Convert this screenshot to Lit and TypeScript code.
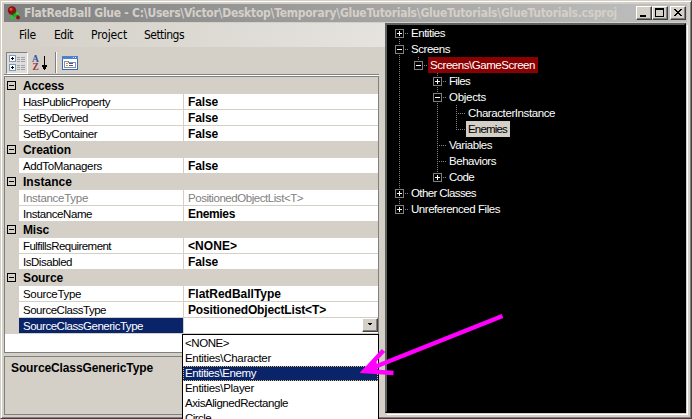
import { LitElement, html, svg, css, nothing } from "lit";
import { customElement, property } from "lit/decorators.js";

/** A run of text whose letter spacing is computed so that it takes a given width. */
@customElement("fit-text")
class FitText extends LitElement {
  @property({ type: Number }) w = 0;
  @property() text = "";
  static styles = css`
    :host { display: inline-block; white-space: pre; }
    .t { display: inline-block; white-space: pre; }
  `;
  render() {
    return html`<span class="t">${this.text}</span>`;
  }
  firstUpdated() {
    const el = this.renderRoot.querySelector(".t") as HTMLElement;
    const natural = el.getBoundingClientRect().width;
    if (this.w && natural) {
      el.style.letterSpacing = `${(this.w - natural) / this.text.length}px`;
    }
  }
}

type Prop = { name: string; nw: number; value?: string; vw?: number; off?: boolean; sel?: boolean };
type Category = { title: string; w: number; props: Prop[] };

const CATEGORIES: Category[] = [
  { title: "Access", w: 41, props: [
    { name: "HasPublicProperty", nw: 87, value: "False", vw: 30 },
    { name: "SetByDerived", nw: 65, value: "False", vw: 30 },
    { name: "SetByContainer", nw: 74, value: "False", vw: 30 },
  ] },
  { title: "Creation", w: 48, props: [{ name: "AddToManagers", nw: 79, value: "False", vw: 30 }] },
  { title: "Instance", w: 49, props: [
    { name: "InstanceType", nw: 65, value: "PositionedObjectList<T>", vw: 115, off: true },
    { name: "InstanceName", nw: 69, value: "Enemies", vw: 47 },
  ] },
  { title: "Misc", w: 26, props: [
    { name: "FulfillsRequirement", nw: 88, value: "<NONE>", vw: 49 },
    { name: "IsDisabled", nw: 49, value: "False", vw: 30 },
  ] },
  { title: "Source", w: 40, props: [
    { name: "SourceType", nw: 58, value: "FlatRedBallType", vw: 93 },
    { name: "SourceClassType", nw: 83, value: "PositionedObjectList<T>", vw: 138 },
    { name: "SourceClassGenericType", nw: 120, sel: true },
  ] },
];

const OPTIONS: [string, number][] = [
  ["<NONE>", 44], ["Entities\\Character", 86], ["Entities\\Enemy", 71],
  ["Entities\\Player", 69], ["AxisAlignedRectangle", 103], ["Circle", 26],
];

type Node = {
  label: string; w: number; depth: number; box?: "+" | "-";
  guides: [number, number, number][]; mark?: "red" | "sel";
};

const NODES: Node[] = [
  { label: "Entities", w: 34, depth: 0, box: "+", guides: [[0, 8, 16]] },
  { label: "Screens", w: 39, depth: 0, box: "-", guides: [[0, 0, 16]] },
  { label: "Screens\\GameScreen", w: 105, depth: 1, box: "-", guides: [[0, 0, 16], [1, 0, 8]], mark: "red" },
  { label: "Files", w: 21, depth: 2, box: "+", guides: [[0, 0, 16], [2, 0, 16]] },
  { label: "Objects", w: 37, depth: 2, box: "-", guides: [[0, 0, 16], [2, 0, 16]] },
  { label: "CharacterInstance", w: 87, depth: 3, guides: [[0, 0, 16], [2, 0, 16], [3, 0, 16]] },
  { label: "Enemies", w: 39, depth: 3, guides: [[0, 0, 16], [2, 0, 16], [3, 0, 8]], mark: "sel" },
  { label: "Variables", w: 43, depth: 2, guides: [[0, 0, 16], [2, 0, 16]] },
  { label: "Behaviors", w: 47, depth: 2, guides: [[0, 0, 16], [2, 0, 16]] },
  { label: "Code", w: 25, depth: 2, box: "+", guides: [[0, 0, 16], [2, 0, 8]] },
  { label: "Other Classes", w: 65, depth: 0, box: "+", guides: [[0, 0, 16]] },
  { label: "Unreferenced Files", w: 89, depth: 0, box: "+", guides: [[0, 0, 8]] },
];

@customElement("app-root")
class AppRoot extends LitElement {
  static styles = css`
    :host {
      display: block; position: relative; width: 692px; height: 419px; overflow: hidden;
      font: 11.5px/16px "Liberation Sans", Arial, sans-serif; color: #000; background: #d4d0c8;
    }
    * { box-sizing: border-box; }
    svg { display: block; flex: none; }
    .window {
      height: 419px; padding: 3px 4px 4px 3px; display: flex; flex-direction: column;
      border: 1px solid; border-color: #d4d0c8 #404040 #404040 #d4d0c8;
      box-shadow: inset 1px 1px #fff, inset -1px -1px #808080;
    }
    .title {
      height: 18px; display: flex; align-items: center; padding: 0 1px 0 2px; flex: none;
      background: linear-gradient(90deg, #808080, #c0c0c0); color: #d4d0c8;
      font: bold 12px/18px "DejaVu Sans Condensed", "DejaVu Sans", sans-serif;
    }
    .title fit-text { margin-left: 4px; flex: 1; }
    .btn {
      width: 16px; height: 14px; background: #d4d0c8; flex: none;
      border: 1px solid; border-color: #fff #404040 #404040 #fff;
      box-shadow: inset -1px -1px #808080;
    }
    .btn.close { margin-left: 2px; }
    .main { flex: 1; display: flex; min-height: 0; margin-top: 1px; }
    .left { width: 381px; display: flex; flex-direction: column; }
    .menu {
      height: 24px; display: flex; flex: none; padding-left: 15px;
      background: linear-gradient(90deg, #d4d0c8, #e4e3de);
      font: 12px/24px "DejaVu Sans Condensed", "DejaVu Sans", sans-serif;
    }
    .menu .item { width: var(--step); }
    .tools {
      height: 27px; width: 375px; flex: none; display: flex; align-items: flex-start;
      padding: 5px 0 0 2px;
    }
    .tool { width: 22px; height: 22px; display: flex; justify-content: center; align-items: center; }
    .tool.on { background: #e0ddd8; border: 1px solid; border-color: #808080 #fff #fff #808080; }
    .tool.az { width: 24px; }
    .az text { font: bold 9.5px "Liberation Serif", serif; }
    .sep { width: 2px; height: 21px; background: #808080; border-right: 1px solid #fff; margin: 0 2px 0 3px; }
    .edge { height: 2px; width: 375px; background: #808080; border-bottom: 1px solid #fff; flex: none; }
    .grid {
      position: relative; width: 375px; height: 277px; border: 1px solid #808080; background: #fff;
      flex: none;
    }
    .cat { height: 16px; background: #d4d0c8; display: flex; font-weight: bold; font-size: 12px; }
    .cat:first-child { height: 17px; padding-top: 1px; }
    .cat svg { margin: 3px 0 0 2px; }
    .cat fit-text { margin-left: 7px; }
    .row { display: flex; height: 16px; border-left: 14px solid #d4d0c8; }
    .name, .value { border-bottom: 1px solid #d4d0c8; height: 16px; }
    .name { width: 165px; padding-left: 4px; border-right: 1px solid #d4d0c8; }
    .value {
      flex: 1; padding-left: 4px; font-weight: bold; font-size: 12px;
      display: flex; justify-content: flex-end;
    }
    .value fit-text { flex: 1; }
    .off { color: #808080; }
    .value.off { font-weight: normal; font-size: 11.5px; }
    .name.sel { background: #0a246a; color: #fff; }
    .combo {
      width: 16px; height: 14px; background: #d4d0c8; border: 1px solid;
      border-color: #fff #404040 #404040 #fff; box-shadow: inset -1px -1px #808080;
    }
    .list {
      position: absolute; left: 177px; top: 257px; width: 197px; height: 110px; z-index: 2;
      border: 1px solid #000; background: #fff; padding-top: 1px; line-height: 15px;
    }
    .opt { height: 15px; padding-left: 2px; }
    .opt.sel { background: #0a246a; color: #fff; outline: 1px dotted #d5b95c; outline-offset: -1px; }
    .desc {
      margin-top: 3px; width: 375px; height: 59px; border: 1px solid #808080; flex: none;
      padding: 4px 6px; font-weight: bold; font-size: 12px; line-height: 14px;
    }
    .tree {
      flex: 1; background: #000; color: #fff; border: 2px solid; border-color: #606060 #000 #000 #606060;
      box-shadow: 1px 1px #d4d0c8, 2px 2px #fff; margin: 0 1px 1px 0;
    }
    .node { display: flex; height: 16px; padding-left: 4px; }
    .label { padding: 0 3px 0 2px; height: 16px; }
    .label.red { background: #8b0000; }
    .label.sel { background: #d4d0c8; color: #000; }
    .arrow { position: absolute; left: 0; top: 0; z-index: 3; pointer-events: none; }
  `;

  private category(c: Category) {
    return html`
      <div class="cat">
        <svg width="9" height="9" shape-rendering="crispEdges">
          <rect x=".5" y=".5" width="8" height="8" fill="none" stroke="#000" /><path d="M2 4.5h5" stroke="#000" />
        </svg>
        <fit-text .w=${c.w} .text=${c.title}></fit-text>
      </div>
      ${c.props.map((p) => html`
        <div class="row">
          <div class="name ${p.off ? "off" : ""} ${p.sel ? "sel" : ""}">
            <fit-text .w=${p.nw} .text=${p.name}></fit-text>
          </div>
          <div class="value ${p.off ? "off" : ""}">
            ${p.value ? html`<fit-text .w=${p.vw!} .text=${p.value}></fit-text>` : nothing}
            ${p.sel ? html`<div class="combo"><svg width="14" height="12" shape-rendering="crispEdges"><path d="M5 4h4v1h-1v1h-2v-1h-1z" /></svg></div>` : nothing}
          </div>
        </div>`)}
    `;
  }

  private node(n: Node) {
    const x = 8 + n.depth * 19;
    const width = x + 10;
    return html`
      <div class="node">
        <svg width=${width} height="16" shape-rendering="crispEdges" fill="none">
          ${n.guides.map(([d, a, b]) => svg`<path d=${`M${8.5 + d * 19} ${a}V${b}`} stroke="#808080" stroke-dasharray="1 1" />`)}
          <path d=${`M${x} 8.5H${x + 9}`} stroke="#808080" stroke-dasharray="1 1" />
          ${n.box ? svg`
            <rect x=${x - 3.5} y="4.5" width="8" height="8" fill="#000" stroke="#808080" />
            <path d=${`M${x - 2} 8.5h5` + (n.box === "+" ? `M${x + 0.5} 6v5` : "")} stroke="#fff" />` : nothing}
        </svg>
        <div class="label ${n.mark ?? ""}"><fit-text .w=${n.w} .text=${n.label}></fit-text></div>
      </div>`;
  }

  render() {
    return html`
      <div class="window">
        <div class="title">
          <svg width="14" height="14" viewBox="0 0 14 14">
            <circle cx="6" cy="4.5" r="4.2" fill="#8d1010" /><circle cx="5" cy="3.3" r="1.5" fill="#d05050" />
            <path d="M7 7l1 4M8 8l4 1" stroke="#0a5a0a" stroke-width="2" />
            <circle cx="9" cy="9" r="1.8" fill="#17b917" /><circle cx="6.500" cy="11.500" r="1.9" fill="#27c927" />
            <circle cx="12" cy="11.500" r="1.9" fill="#8d1010" /><circle cx="11.500" cy="7.500" r="1.6" fill="#35d835" />
          </svg>
          <fit-text .w=${593} .text=${"FlatRedBall Glue - C:\\Users\\Victor\\Desktop\\Temporary\\GlueTutorials\\GlueTutorials\\GlueTutorials.csproj"}></fit-text>
          <div class="btn"><svg width="14" height="12" shape-rendering="crispEdges"><path d="M3 8h6v2h-6z" /></svg></div>
          <div class="btn"><svg width="14" height="12" shape-rendering="crispEdges"><path d="M2 1h9v9h-9zM3 3v6h7v-6z" fill-rule="evenodd" /></svg></div>
          <div class="btn close"><svg width="14" height="12" shape-rendering="crispEdges"><path d="M3 2h2v1h1v1h2v-1h1v-1h2v1h-1v1h-1v1h-1v1h1v1h1v1h1v1h-2v-1h-1v-1h-2v1h-1v1h-2v-1h1v-1h1v-1h1v-1h-1v-1h-1v-1h-1z" /></svg></div>
        </div>
        <div class="main">
          <div class="left">
            <div class="menu">
              ${([["File", 17, 35], ["Edit", 19, 37], ["Project", 36, 53], ["Settings", 40, 60]] as [string, number, number][]).map(
                ([t, w, step]) => html`<div class="item" style="--step:${step}px"><fit-text .w=${w} .text=${t}></fit-text></div>`)}
            </div>
            <div class="tools">
              <div class="tool on">
                <svg width="16" height="16" shape-rendering="crispEdges">
                  <rect x=".5" y=".5" width="6" height="6" rx="1" fill="#fff" stroke="#7a9ac0" /><path d="M2 3.5h3M3.5 2v3" stroke="#000" />
                  <rect x=".5" y="9.5" width="6" height="6" rx="1" fill="#fff" stroke="#7a9ac0" /><path d="M2 12.5h3M3.5 11v3" stroke="#000" />
                  <path d="M8 2.5h8M8 4.5h8M8 6.5h8M8 10.5h8M8 12.5h8M8 14.5h8" stroke="#98a2b0" stroke-dasharray="3 1 4 0" />
                </svg>
              </div>
              <div class="tool az">
                <svg width="16" height="16" fill="none">
                  <text x="0" y="7" fill="#3050a0">A</text>
                  <text x=".5" y="15" fill="#a03040">Z</text>
                  <path d="M12.5 1v14M10 10.5h5M10 11.5h5M11 12.5h3M11 13.5h3" stroke="#000" shape-rendering="crispEdges" />
                </svg>
              </div>
              <div class="sep"></div>
              <div class="tool">
                <svg width="16" height="16" shape-rendering="crispEdges" fill="none">
                  <rect x=".5" y="1.5" width="15" height="13" fill="#fff" stroke="#3a68b4" />
                  <path d="M0 1h16v3h-16z" fill="#4f80d0" /><path d="M11 2.5h4" stroke="#d8e6ff" stroke-dasharray="1 1" />
                  <path d="M2.500 12.500v-6h4v1h7v5z" stroke="#7f8fb0" />
                  <path d="M4 8.500h2M4 10.500h2" stroke="#d59020" /><path d="M7 8.500h5M7 10.500h5" stroke="#557" stroke-dasharray="4 1" />
                </svg>
              </div>
            </div>
            <div class="edge"></div>
            <div class="grid">
              ${CATEGORIES.map((c) => this.category(c))}
              <div class="list">
                ${OPTIONS.map(([t, w], i) => html`<div class="opt ${i === 2 ? "sel" : ""}"><fit-text .w=${w} .text=${t}></fit-text></div>`)}
              </div>
            </div>
            <div class="desc"><fit-text .w=${142} .text=${"SourceClassGenericType"}></fit-text></div>
          </div>
          <div class="tree">${NODES.map((n) => this.node(n))}</div>
        </div>
      </div>
      <svg class="arrow" width="692" height="419" fill="none" stroke="#f0f">
        <path d="M502.500 316L372 368" stroke-width="4.500" />
        <path d="M383.500 350.500L364.500 371L393.500 373" stroke-width="4.500" />
        <path d="M360.500 371.500L376 358L378 373z" fill="#f0f" stroke="none" />
      </svg>
    `;
  }
}
